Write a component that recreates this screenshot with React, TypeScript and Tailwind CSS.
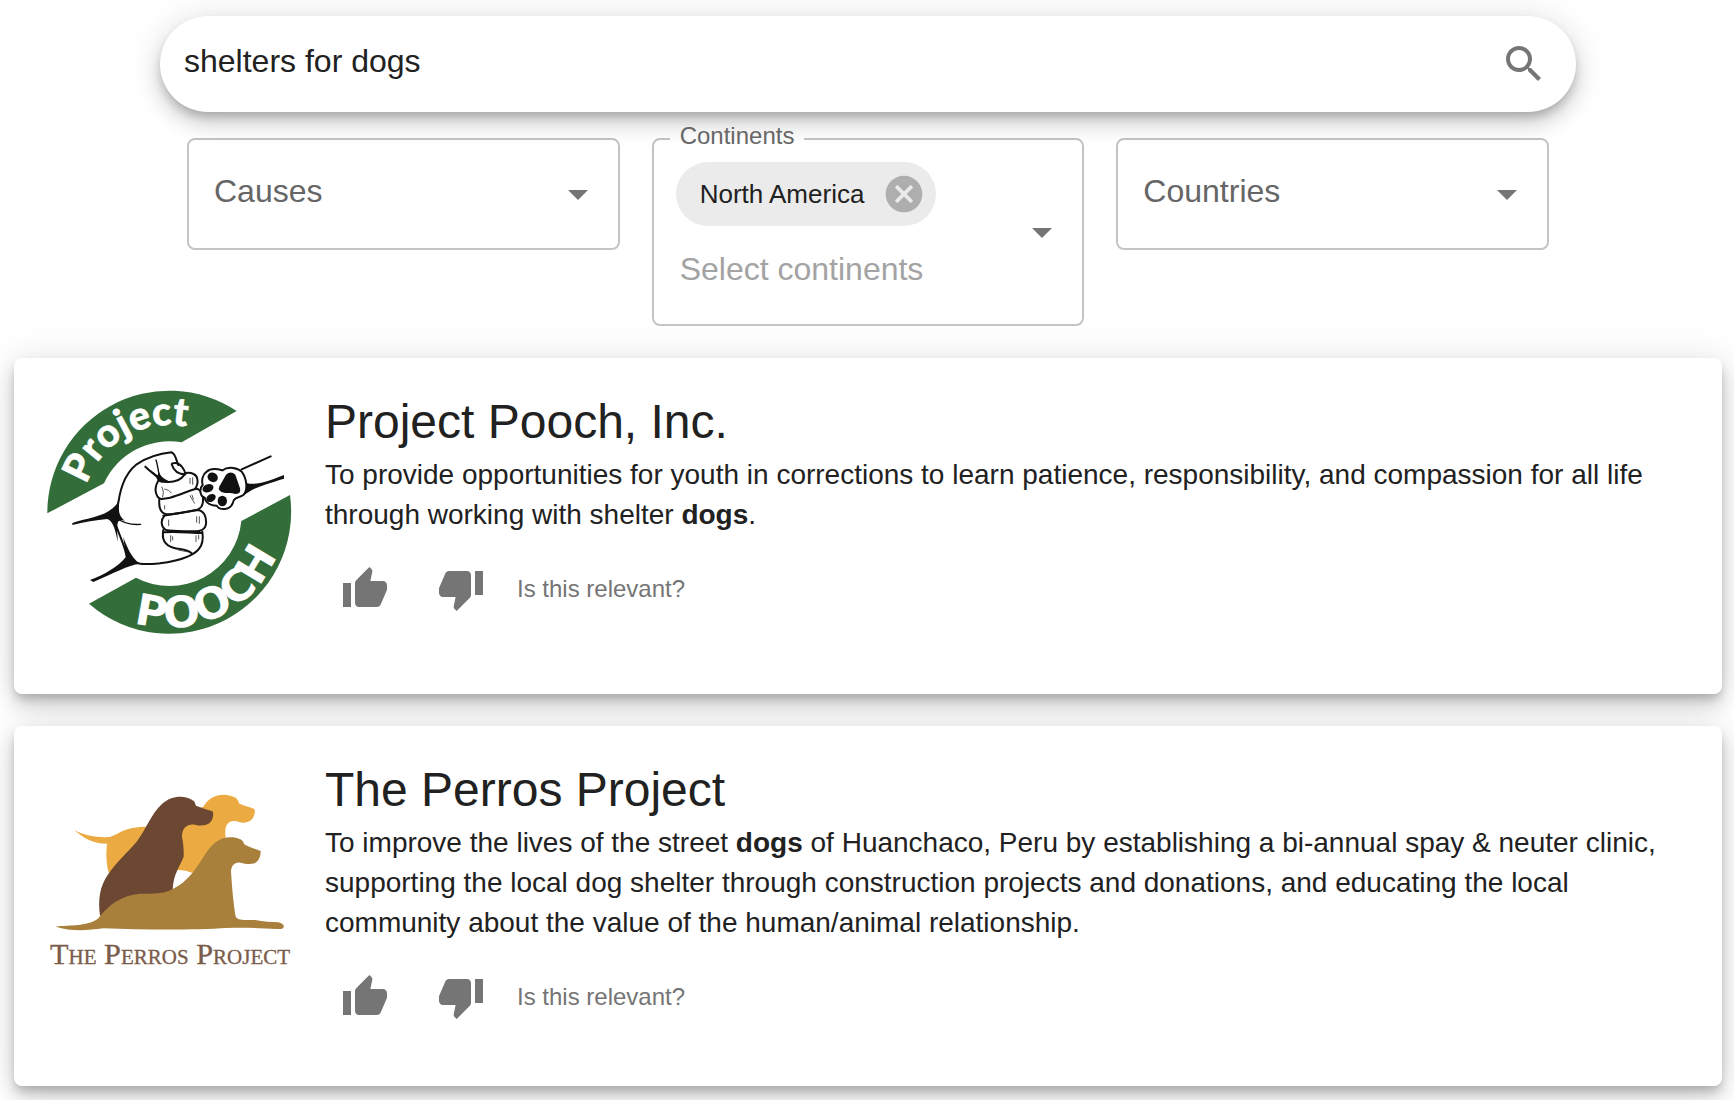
import React from "react";

const ICONS = {
  search:
    "M15.5 14h-.79l-.28-.27C15.41 12.59 16 11.11 16 9.5 16 5.91 13.09 3 9.5 3S3 5.91 3 9.5 5.91 16 9.5 16c1.61 0 3.09-.59 4.23-1.57l.27.28v.79l5 4.99L20.49 19l-4.99-5zm-6 0C7.01 14 5 11.99 5 9.5S7.01 5 9.5 5 14 7.01 14 9.5 11.99 14 9.5 14z",
  arrow: "M7 10l5 5 5-5z",
  cancel:
    "M12 2C6.47 2 2 6.47 2 12s4.47 10 10 10 10-4.47 10-10S17.53 2 12 2zm5 13.59L15.59 17 12 13.41 8.41 17 7 15.59 10.59 12 7 8.41 8.41 7 12 10.59 15.59 7 17 8.41 13.41 12 17 15.59z",
  up: "M1 21h4V9H1v12zm22-11c0-1.1-.9-2-2-2h-6.31l.95-4.57.03-.32c0-.41-.17-.79-.44-1.06L14.17 1 7.59 7.59C7.22 7.95 7 8.45 7 9v10c0 1.1.9 2 2 2h9c.83 0 1.54-.5 1.84-1.22l3.02-7.05c.09-.23.14-.47.14-.73v-2z",
  down: "M15 3H6c-.83 0-1.54.5-1.84 1.22l-3.02 7.05c-.09.23-.14.47-.14.73v2c0 1.1.9 2 2 2h6.31l-.95 4.57-.03.32c0 .41.17.79.44 1.06L9.83 23l6.59-6.59c.36-.36.58-.86.58-1.41V5c0-1.1-.9-2-2-2zm4 0v12h4V3h-4z",
};

function Icon({ name, className = "size-12" }: { name: keyof typeof ICONS; className?: string }) {
  return (
    <svg viewBox="0 0 24 24" fill="currentColor" aria-hidden="true" className={className}>
      <path d={ICONS[name]} />
    </svg>
  );
}

function PoochLogo() {
  return (
    <svg viewBox="48 45 741 741" role="img" aria-label="Project Pooch logo" className="w-full">
      <defs>
        <path id="pooch-top" d="M156 412A262 262 0 0 1 680 412" />
        <path id="pooch-bottom" d="M71 412A347 347 0 0 0 765 412" />
      </defs>
      <g fill="#336d39">
        <path d="M52 415A366 366 0 0 1 620 108L455 202A216 216 0 0 0 222 325Z" />
        <path d="M780 360A366 366 0 0 1 177 686L318 608A216 216 0 0 0 634 438Z" />
      </g>
      <g fill="#fff" fontWeight="900">
        <text fontSize="118" fontFamily="Lato, sans-serif" stroke="#fff" strokeWidth="2">
          <textPath href="#pooch-top" startOffset="84">Project</textPath>
        </text>
        <text fontSize="130" fontFamily="'DejaVu Sans', sans-serif">
          <textPath href="#pooch-bottom" startOffset="436">POOCH</textPath>
        </text>
      </g>
      <g fill="none" stroke="#111" strokeWidth="6" strokeLinecap="round" strokeLinejoin="round">
        <path d="M262 405C268 350 280 300 320 268C350 248 385 236 425 232C438 238 438 256 445 270" />
        <path d="M250 425C262 470 285 510 290 545C310 572 350 568 390 565C440 558 490 545 508 520C520 505 520 490 517 470" />
        <path d="M425 268C430 285 440 298 466 298C466 285 450 262 434 264Q426 264 425 268" />
        <path d="M346 275C362 290 375 300 388 310C398 322 420 325 445 315C458 310 462 300 468 294C485 292 500 298 502 312Q505 328 495 342" />
        <path d="M388 312C376 330 374 350 382 364C390 376 398 372 420 368C450 360 480 345 500 341C515 345 522 365 518 385C515 400 505 405 490 407L400 422" />
        <path d="M388 372C386 395 392 415 410 418C440 418 470 410 500 405C522 405 530 425 528 448C525 465 510 470 490 469C460 468 430 470 408 465C392 455 392 435 402 424" />
        <path d="M400 465C395 490 402 510 430 518C450 524 470 522 485 535M402 472C440 468 480 474 515 474" />
        <path d="M258 428C280 445 305 450 332 448M378 255C385 275 385 300 392 315" strokeWidth="4" />
        <path
          d="M404 342Q418 344 424 354M396 336Q404 352 398 366M480 310V325M488 308V328M480 362L494 385M486 360L490 372M500 425V442M508 425V445M416 435V452M422 482V500M428 485V495M498 482V500M506 480V492M404 392V402M445 525L470 530"
          stroke="#555"
          strokeWidth="3"
        />
        <path d="M635 283L722 244" />
      </g>
      <g fill="#111">
        <path d="M384 280C388 300 394 308 416 318C404 326 392 324 384 318C380 308 376 300 360 284C372 292 380 300 384 300Z" />
        <path d="M127 444C170 430 220 425 248 400C260 390 262 385 268 370C266 400 262 420 285 438C262 428 258 440 264 500C256 470 252 440 232 432C200 435 160 442 127 450Z" />
        <path d="M180 615C220 600 265 575 288 545C284 525 284 505 279 485C290 510 300 545 330 566C295 570 250 595 190 621Z" />
        <path d="M640 318C660 335 700 325 762 300V311C715 325 680 335 655 352C635 365 620 374 605 378C630 360 650 350 640 318Z" />
      </g>
      <path
        d="M530 290C545 276 570 284 578 286C595 272 625 280 635 290C650 310 655 345 640 360C625 370 612 365 608 385C600 405 570 408 560 392C545 392 528 385 524 368C508 362 508 340 518 330C514 315 518 298 530 290Z"
        fill="#fff"
        stroke="#111"
        strokeWidth="6"
      />
      <g fill="#111">
        <path d="M588 299Q602 286 616 299L630 340Q634 358 616 357C602 351 590 357 574 351Q560 342 572 328Z" />
        <ellipse cx="548" cy="307" rx="16" ry="14" transform="rotate(30 548 307)" />
        <ellipse cx="534" cy="340" rx="17" ry="12" transform="rotate(-20 534 340)" />
        <ellipse cx="543" cy="369" rx="15" ry="11" transform="rotate(-30 543 369)" />
        <ellipse cx="577" cy="378" rx="14" ry="16" />
      </g>
    </svg>
  );
}

function PerrosLogo() {
  return (
    <svg viewBox="48 -36 741 741" role="img" aria-label="The Perros Project logo" className="w-full">
      <path
        fill="#ecab42"
        d="M132 179C165 198 205 203 240 201C270 190 285 170 350 170L520 110C535 85 560 72 590 75C610 78 625 84 627 100C640 108 658 110 674 118C676 130 672 142 664 150C650 160 635 160 620 154C595 150 582 165 587 200L500 305L485 308Q465 298 440 300L237 310C228 280 228 250 231 221C190 220 160 205 132 179Z"
      />
      <path
        fill="#6c4832"
        d="M210 437C204 390 208 350 235 312C260 275 290 250 320 215C350 175 365 130 395 103C425 75 465 75 490 92C496 96 495 102 498 107C515 114 530 118 548 124C552 138 548 150 538 160C525 168 510 168 495 164C475 160 455 172 456 200C460 220 462 240 461 260C450 290 430 310 428 360L300 420Z"
      />
      <path
        fill="#a87f3b"
        d="M77 470C120 465 175 470 205 445C235 405 275 375 330 371C370 370 400 373 430 356C470 338 495 300 520 262C545 220 570 198 610 202C630 206 640 210 642 222C658 232 675 236 692 243C692 258 688 272 674 280C660 284 645 282 632 278C610 276 604 290 603 305C606 350 610 400 617 440C625 452 645 450 675 450C700 455 725 456 745 457C758 460 763 465 761 472C758 478 750 477 740 477C690 474 640 472 590 474C500 480 350 480 220 475C170 482 120 484 77 470Z"
      />
      <text
        x="420"
        y="583"
        textAnchor="middle"
        fill="#7b5c4b"
        stroke="#7b5c4b"
        strokeWidth="1"
        fontSize="91"
        fontFamily="'Liberation Serif', serif"
        fontVariant="small-caps"
      >
        The Perros Project
      </text>
    </svg>
  );
}

function FilterField({ label }: { label: string }) {
  return (
    <div className="flex h-28 items-center rounded-lg border-2 border-black/23 pr-4 pl-[25px]">
      <input
        aria-label={label}
        placeholder={label}
        className="min-w-0 flex-1 bg-transparent pb-1.5 text-[32px] leading-10 outline-none placeholder:text-[#666]"
      />
      <button type="button" aria-label={`Open ${label}`} className="text-[#757575]">
        <Icon name="arrow" />
      </button>
    </div>
  );
}

function ContinentsField() {
  return (
    <fieldset className="-mt-4 min-w-0 rounded-lg border-2 border-black/23 pr-4 pl-[22px]">
      <legend className="-ml-1.5 px-[10px] pb-1.5 text-2xl leading-7 text-[#666]">Continents</legend>
      <div className="flex items-center">
        <div className="flex min-w-0 flex-1 flex-col items-start gap-[23px] pt-1.5 pb-[35px]">
          <span className="flex h-16 items-center gap-[18px] rounded-full bg-[#ebebeb] pr-[10px] pl-6 text-[26px] text-[#212121]">
            North America
            <button type="button" aria-label="Remove North America" className="text-[#aeaeae]">
              <Icon name="cancel" className="size-11" />
            </button>
          </span>
          <input
            aria-label="Continents"
            placeholder="Select continents"
            className="w-full bg-transparent pl-1 text-[32px] leading-10 outline-none placeholder:text-[#a3a3a3]"
          />
        </div>
        <button type="button" aria-label="Open Continents" className="mb-4 text-[#757575]">
          <Icon name="arrow" />
        </button>
      </div>
    </fieldset>
  );
}

const ELEVATION =
  "shadow-[0_6px_10px_-2px_rgba(0,0,0,0.2),0_12px_20px_0_rgba(0,0,0,0.14),0_2px_36px_0_rgba(0,0,0,0.12)]";

function ResultCard({ logo, title, children }: { logo: React.ReactNode; title: string; children: React.ReactNode }) {
  return (
    <article className={`flex items-start gap-8 rounded-lg bg-white px-8 pt-8 pb-[41px] ${ELEVATION}`}>
      <div className="mb-4 w-[247px] shrink-0">{logo}</div>
      <div className="min-w-0 flex-1">
        <h2 className="text-5xl leading-16">{title}</h2>
        <p className="pt-px text-[28px] leading-10">{children}</p>
        <div className="mt-1.5 -ml-2 flex items-center text-[#757575]">
          <button type="button" aria-label="Relevant" className="p-6">
            <Icon name="up" />
          </button>
          <button type="button" aria-label="Not relevant" className="p-6">
            <Icon name="down" />
          </button>
          <span className="ml-2 text-2xl">Is this relevant?</span>
        </div>
      </div>
    </article>
  );
}

export default function App() {
  return (
    <main className="min-h-screen bg-white pt-4 pr-3 pb-[14px] pl-[14px] font-['Liberation_Sans',Arial,sans-serif] text-[#212121]">
      <form
        role="search"
        onSubmit={(e) => e.preventDefault()}
        className={`mx-4 flex h-24 items-center rounded-full bg-white pr-7 pl-6 lg:mx-[146px] ${ELEVATION}`}
      >
        <input
          aria-label="Search"
          defaultValue="shelters for dogs"
          className="min-w-0 flex-1 bg-transparent pb-1.5 text-[32px] leading-10 outline-none"
        />
        <button type="submit" aria-label="Search" className="text-[#757575]">
          <Icon name="search" />
        </button>
      </form>

      <div className="mx-4 mt-[26px] grid items-start gap-8 lg:mx-[173px] lg:grid-cols-3">
        <FilterField label="Causes" />
        <ContinentsField />
        <FilterField label="Countries" />
      </div>

      <div className="mt-8 flex flex-col gap-8">
        <ResultCard logo={<PoochLogo />} title="Project Pooch, Inc.">
          To provide opportunities for youth in corrections to learn patience, responsibility, and compassion for all
          life through working with shelter <b>dogs</b>.
        </ResultCard>
        <ResultCard logo={<PerrosLogo />} title="The Perros Project">
          To improve the lives of the street <b>dogs</b> of Huanchaco, Peru by establishing a bi-annual spay &amp;
          neuter clinic, supporting the local dog shelter through construction projects and donations, and educating
          the local community about the value of the human/animal relationship.
        </ResultCard>
      </div>
    </main>
  );
}
